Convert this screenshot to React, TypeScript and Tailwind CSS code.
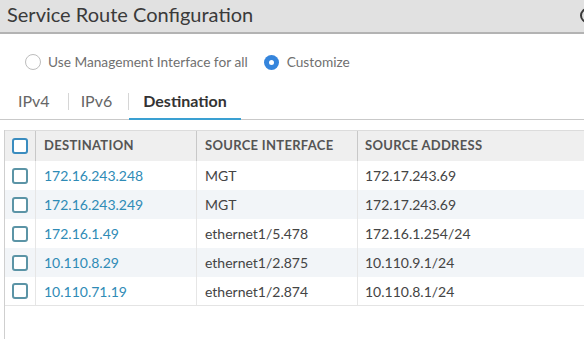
const rows = [
  ['172.16.243.248', 'MGT', '172.17.243.69'],
  ['172.16.243.249', 'MGT', '172.17.243.69'],
  ['172.16.1.49', 'ethernet1/5.478', '172.16.1.254/24'],
  ['10.110.8.29', 'ethernet1/2.875', '10.110.9.1/24'],
  ['10.110.71.19', 'ethernet1/2.874', '10.110.8.1/24'],
]

const Checkbox = ({ head }: { head?: boolean }) => (
  <span
    className={`block w-[16px] h-[16px] rounded-[3px] border-2 bg-white ${
      head ? 'border-[#3a8cbf]' : 'border-[#5b94a6]'
    }`}
  />
)

const App = () => {
  return (
    <div className="w-[584px] h-[339px] overflow-hidden bg-white font-['Lato',sans-serif] text-[#333]">
      {/* title bar */}
      <div className="h-[34px] bg-[#e1e1e1] border-b-2 border-[#b3b3b3] flex items-start justify-between pl-[7px] pt-[1px]">
        <span className="text-[20px] leading-[26px] text-[#3a3a3a]">Service Route Configuration</span>
        <span className="mt-[7px] -mr-[11px] w-[15px] h-[15px] rounded-full border-2 border-[#3a3a3a]" />
      </div>

      {/* radio row */}
      <div className="mt-[19px] h-[18px] flex items-center pl-[25px] text-[13.7px] text-[#707070]">
        <span className="w-[16px] h-[16px] rounded-full border border-[#bdbdbd] bg-white" />
        <span className="ml-[7px]">Use Management Interface for all</span>
        <span className="ml-[16px] w-[15px] h-[15px] rounded-full bg-[#3585dc] flex items-center justify-center">
          <span className="w-[5px] h-[5px] rounded-full bg-white" />
        </span>
        <span className="ml-[8px]">Customize</span>
      </div>

      {/* tabs */}
      <div className="mt-[12px] h-[37px] flex items-stretch border-b border-[#c9c9c9] text-[16px]">
        <span className="pl-[18px] flex items-center text-[#666]">IPv4</span>
        <span className="ml-[18px] self-center w-px h-[17px] bg-[#d6d6d6]" />
        <span className="ml-[12px] flex items-center text-[#666]">IPv6</span>
        <span className="ml-[16px] self-center w-px h-[17px] bg-[#d6d6d6]" />
        <span className="w-[112px] pl-[14px] flex items-center font-bold text-[#333] border-b-2 border-[#3aa0d2] -mb-px">
          Destination
        </span>
      </div>

      {/* table */}
      <div className="mt-[10px] ml-[4px] h-[300px] border-l border-[#cfcfcf]">
        <div className="h-[31px] flex bg-[#efefef] border-t border-[#dcdcdc] text-[13px] font-bold tracking-[0.3px] text-[#555]">
          <div className="w-[30px] flex items-center pl-[7px]">
            <Checkbox head />
          </div>
          <div className="w-[161px] border-l border-[#c8c8c8] flex items-center pl-[8px]">DESTINATION</div>
          <div className="w-[161px] border-l border-[#c8c8c8] flex items-center pl-[8px]">SOURCE INTERFACE</div>
          <div className="flex-1 border-l border-[#c8c8c8] flex items-center pl-[7px]">SOURCE ADDRESS</div>
        </div>
        {rows.map(([dest, iface, addr], i) => (
          <div
            key={i}
            className={`h-[29px] flex text-[14px] ${i % 2 === 1 ? 'bg-[#f2f5f8]' : 'bg-white'} ${
              i === rows.length - 1 ? 'border-b border-[#e4e4e4]' : ''
            }`}
          >
            <div className="w-[30px] flex items-center pl-[7px]">
              <Checkbox />
            </div>
            <div className="w-[161px] border-l border-[#e6e6e6] flex items-center pl-[8px] text-[#2f8bb6]">{dest}</div>
            <div className="w-[161px] border-l border-[#e6e6e6] flex items-center pl-[8px] text-[#444]">{iface}</div>
            <div className="flex-1 border-l border-[#e6e6e6] flex items-center pl-[7px] text-[#444]">{addr}</div>
          </div>
        ))}
      </div>
    </div>
  )
}

export default App
